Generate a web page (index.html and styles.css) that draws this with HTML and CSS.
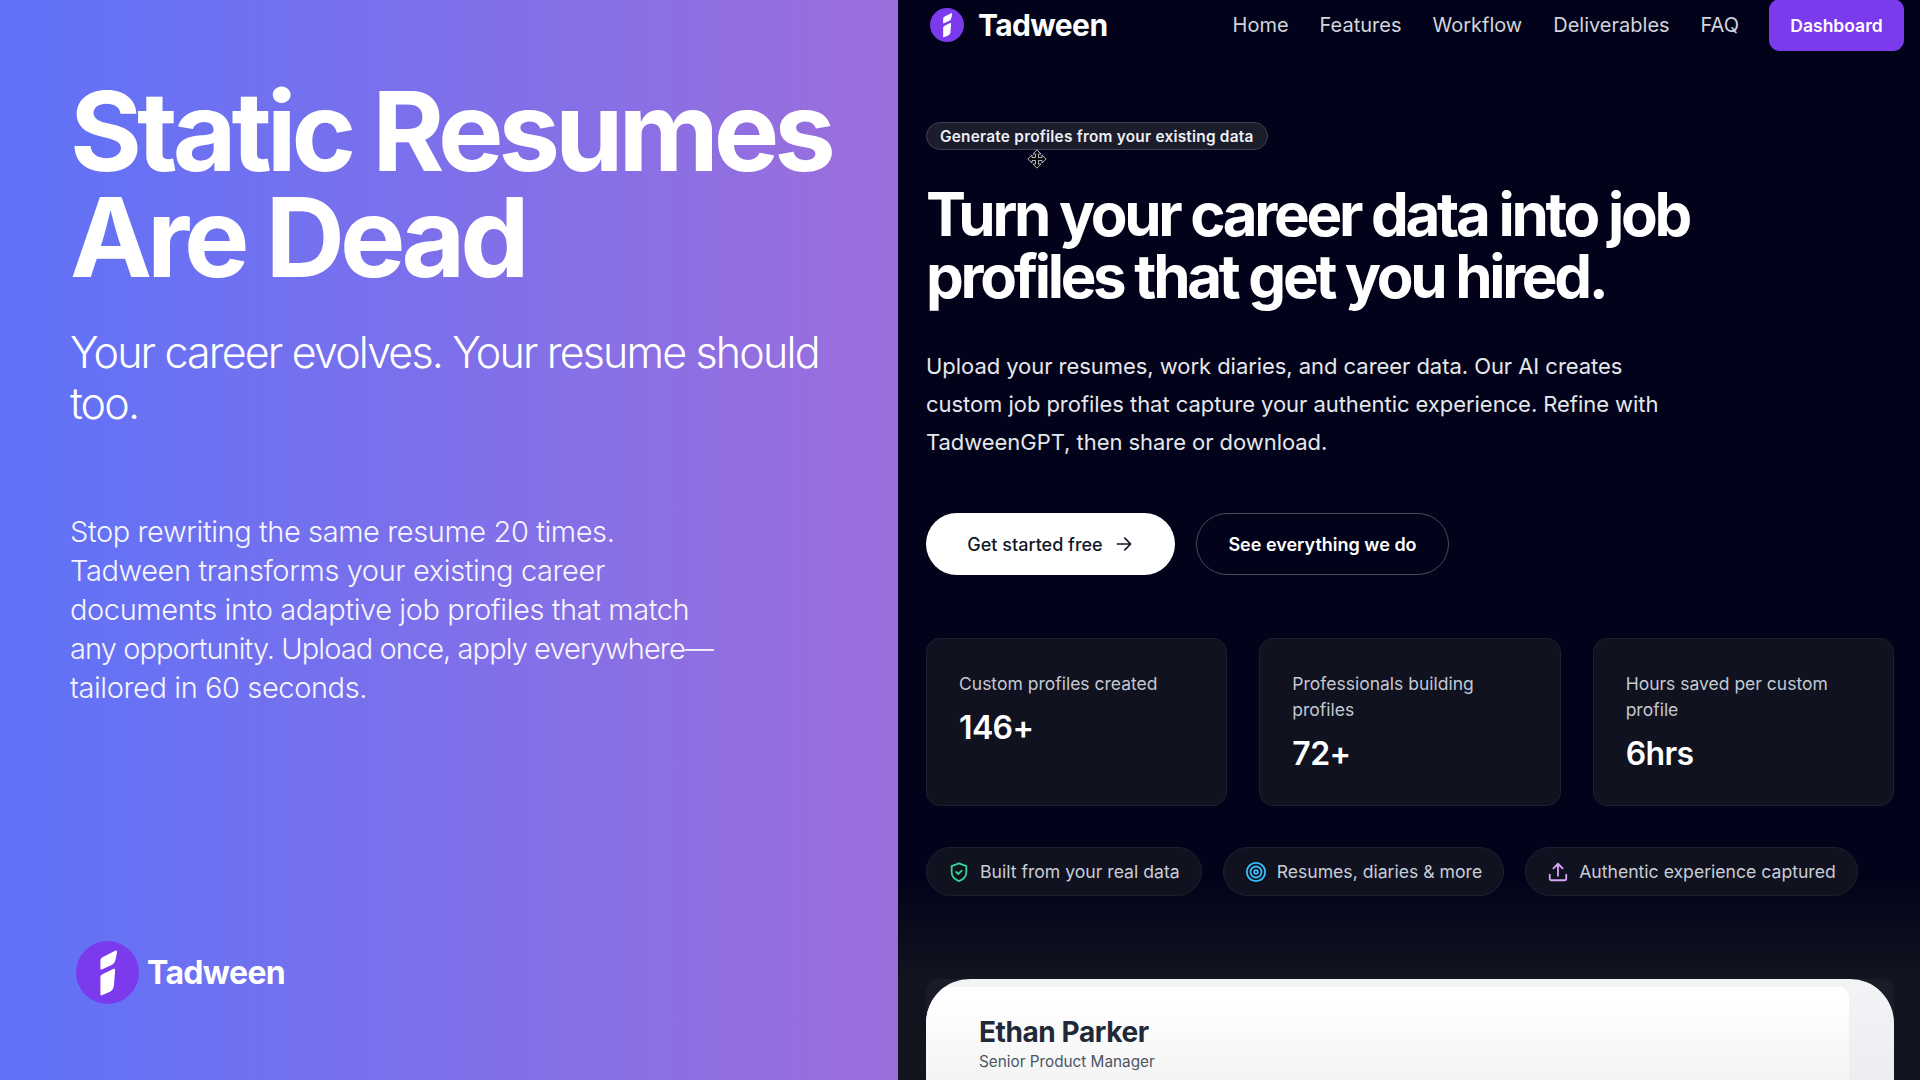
FILE: index.html
```html
<!DOCTYPE html>
<html lang="en">
<head>
<meta charset="utf-8">
<title>Tadween</title>
<link rel="stylesheet" href="styles.css">
</head>
<body>
<div class="page">
  <aside class="promo">
    <div class="promo-top">
      <h2 class="promo-title">Static Resumes<br>Are Dead</h2>
      <p class="promo-sub">Your career evolves. Your resume should too.</p>
      <p class="promo-body">Stop rewriting the same resume 20 times. Tadween transforms your existing career documents into adaptive job profiles that match <span class="promo-tight">any opportunity. Upload once, apply everywhere—</span><br>tailored in 60 seconds.</p>
    </div>
    <div class="promo-brand">
      <svg class="promo-logo" viewBox="0 0 62 62"><circle cx="31" cy="31" r="31" fill="#7c3aed"/><path d="M24 19.5C24 17.5 25 16.5 27 15.5L38.5 9.6C40 9 40.6 9.6 40.3 11.5L39 18C38.4 21 37 22.6 34.5 23.8L25.5 28C24.5 28.400 24 28 24 27ZM24 36C24 34.500 24.700 33.500 26 32.800L36.500 27.500C38 26.800 38.600 27.300 38.500 29L37.300 44C37 47 35.500 49 33 50.200L25.500 53.500C24.500 53.900 24 53.500 24 52.500Z" fill="#fff"/></svg>
      <span class="promo-name">Tadween</span>
    </div>
  </aside>
  <main class="main">
    <nav class="nav">
      <div class="brand">
        <svg class="brand-logo" viewBox="0 0 62 62"><circle cx="31" cy="31" r="31" fill="#7c3aed"/><path d="M24 19.5C24 17.5 25 16.5 27 15.5L38.5 9.6C40 9 40.6 9.6 40.3 11.5L39 18C38.4 21 37 22.6 34.5 23.8L25.5 28C24.5 28.400 24 28 24 27ZM24 36C24 34.500 24.700 33.500 26 32.800L36.500 27.500C38 26.800 38.600 27.300 38.500 29L37.300 44C37 47 35.500 49 33 50.200L25.500 53.500C24.500 53.900 24 53.500 24 52.500Z" fill="#fff"/></svg>
        <span class="brand-name">Tadween</span>
      </div>
      <div class="nav-links">
        <a class="nav-link">Home</a>
        <a class="nav-link">Features</a>
        <a class="nav-link">Workflow</a>
        <a class="nav-link">Deliverables</a>
        <a class="nav-link">FAQ</a>
        <a class="nav-cta">Dashboard</a>
      </div>
    </nav>
    <section class="content">
      <div class="badge">Generate profiles from your existing data</div>
      <svg class="cursor" viewBox="0 0 20 20"><path d="M10 .8 14 5H11.500V8.500H15V6L19.200 10 15 14V11.500H11.500V15H14L10 19.200 6 15H8.500V11.500H5V14L.8 10 5 6V8.500H8.500V5H6Z" fill="#0a0a0f" stroke="#c8c8cc" stroke-width=".9"/></svg>
      <h1 class="title">Turn your career data into job profiles that get you hired.</h1>
      <p class="lead">Upload your resumes, work diaries, and career data. Our AI creates custom job profiles that capture your authentic experience. Refine with TadweenGPT, then share or download.</p>
      <div class="actions">
        <a class="btn btn-primary">Get started free
          <svg class="btn-arrow" viewBox="0 0 24 24"><path d="M4 12h16M13 5l7 7-7 7" fill="none" stroke="#111827" stroke-width="2" stroke-linecap="round" stroke-linejoin="round"/></svg>
        </a>
        <a class="btn btn-ghost">See everything we do</a>
      </div>
      <div class="stats">
        <div class="stat"><div class="stat-label">Custom profiles created</div><div class="stat-value">146+</div></div>
        <div class="stat"><div class="stat-label">Professionals building profiles</div><div class="stat-value">72+</div></div>
        <div class="stat"><div class="stat-label">Hours saved per custom profile</div><div class="stat-value">6hrs</div></div>
      </div>
      <div class="chips">
        <div class="chip">
          <svg class="chip-icon" viewBox="0 0 24 24" fill="none" stroke="#34d399" stroke-width="2" stroke-linecap="round" stroke-linejoin="round"><path d="M12 2.500 20 5.500V12C20 17 16.500 20.300 12 22 7.500 20.300 4 17 4 12V5.500Z"/><path d="M9 12l2.200 2.200L15 10.500"/></svg>
          Built from your real data
        </div>
        <div class="chip">
          <svg class="chip-icon" viewBox="0 0 24 24" fill="none" stroke="#38bdf8" stroke-width="2"><circle cx="12" cy="12" r="10"/><circle cx="12" cy="12" r="6"/><circle cx="12" cy="12" r="2"/></svg>
          Resumes, diaries &amp; more
        </div>
        <div class="chip">
          <svg class="chip-icon" viewBox="0 0 24 24" fill="none" stroke="#d8a4f8" stroke-width="2" stroke-linecap="round" stroke-linejoin="round"><path d="M3 15v4a2 2 0 0 0 2 2h14a2 2 0 0 0 2-2v-4"/><path d="M12 16V3M7 8l5-5 5 5"/></svg>
          Authentic experience captured
        </div>
      </div>
      <div class="preview">
        <div class="preview-frame">
          <div class="preview-sheet">
            <div class="preview-name">Ethan Parker</div>
            <div class="preview-role">Senior Product Manager</div>
          </div>
        </div>
      </div>
    </section>
  </main>
</div>
</body>
</html>
```

FILE: styles.css
```css
* { box-sizing: border-box; }
html, body { margin: 0; height: 100%; overflow: hidden; }
body { font-family: Inter, "Noto Sans", sans-serif; background: #02031a; }
a { text-decoration: none; }
h1, h2, p { margin: 0; }

.page { display: flex; width: 1920px; height: 1080px; overflow: hidden; }

.promo {
  width: 898px;
  flex: none;
  display: flex;
  flex-direction: column;
  justify-content: space-between;
  padding: 78px 50px 76px 70px;
  color: #fff;
  background: linear-gradient(90deg, #5f72f8 0%, #9c6edc 100%);
}
.promo-title { font-size: 110px; line-height: 106px; font-weight: 700; letter-spacing: -0.046em; }
.promo-sub { margin-top: 37px; font-size: 43px; line-height: 51px; font-weight: 300; letter-spacing: -1.85px; }
.promo-body { margin-top: 83px; width: 660px; font-size: 29px; line-height: 39px; font-weight: 300; letter-spacing: -0.4px; color: #f6f5fe; }
.promo-tight { white-space: nowrap; letter-spacing: -0.92px; }
.promo-brand { display: flex; align-items: center; gap: 8px; margin-left: 6px; }
.promo-logo { width: 63px; height: 63px; }
.promo-name { font-size: 32px; font-weight: 700; letter-spacing: -0.02em; }

.main {
  flex: 1;
  min-width: 0;
  background: linear-gradient(180deg, #02031a 0, #02031a 880px, #12141f 980px);
  padding: 0 26px 0 28px;
}

.nav { display: flex; align-items: center; justify-content: space-between; height: 52px; margin: -1px -10px 0 4px; }
.brand { display: flex; align-items: center; gap: 14px; }
.brand-logo { width: 34px; height: 34px; }
.brand-name { color: #fff; font-size: 30px; font-weight: 700; letter-spacing: -0.02em; }
.nav-links { display: flex; align-items: center; gap: 31px; }
.nav-link { color: #d1d5db; font-size: 20px; }
.nav-cta {
  display: flex; align-items: center; justify-content: center;
  width: 135px; height: 52px; margin-left: -1px;
  background: #7c3aed; border-radius: 11px;
  color: #fff; font-size: 17.500px; font-weight: 600;
}

.content { position: relative; padding-top: 71px; }
.badge {
  display: inline-flex; align-items: center; height: 28px; padding: 0 13px;
  background: #1b1c2c; border: 1px solid #3d3f4f; border-radius: 14px;
  color: #eef0f4; font-size: 15.400px; font-weight: 600; letter-spacing: 0.015em;
}
.cursor { position: absolute; left: 101px; top: 98px; width: 20px; height: 20px; }
.title { margin-top: 33px; font-size: 60px; line-height: 62px; font-weight: 700; letter-spacing: -3.3px; color: #fff; }
.lead { margin-top: 40px; width: 760px; font-size: 22px; line-height: 38px; letter-spacing: -0.05px; color: #e5e7eb; }

.actions { display: flex; gap: 21px; margin-top: 52px; }
.btn {
  display: inline-flex; align-items: center; justify-content: center; gap: 11px;
  height: 62px; border-radius: 31px; font-size: 18px;
}
.btn-primary { width: 249px; background: #fff; color: #111827; font-weight: 500; }
.btn-arrow { width: 20px; height: 20px; }
.btn-ghost { width: 253px; border: 1px solid #474957; color: #fff; font-weight: 600; }

.stats { display: grid; grid-template-columns: repeat(3, 1fr); gap: 32px; margin-top: 63px; }
.stat {
  height: 168px; padding: 32px;
  background: #10121f; border: 1px solid #1e2030; border-radius: 14px;
}
.stat-label { font-size: 17.500px; line-height: 26px; color: #c4c8d2; }
.stat-value { margin-top: 11px; font-size: 32px; line-height: 40px; font-weight: 600; letter-spacing: -0.02em; color: #fff; }

.chips { display: flex; gap: 21px; margin-top: 41px; }
.chip {
  display: flex; align-items: center; gap: 10px;
  height: 49px; padding: 0 21px 0 21px;
  background: #10121f; border: 1px solid #1e2030; border-radius: 25px;
  color: #c9cdd7; font-size: 17.620px;
}
.chip-icon { width: 22px; height: 22px; flex: none; }

.preview { margin-top: 83px; height: 140px; background: #1a1c2a; border-radius: 12px 12px 0 0; }
.preview-frame {
  height: 100%; padding: 8px 45px 0 0;
  background: linear-gradient(180deg, #f3f4f6, #eaebee);
  border-radius: 44px 44px 0 0;
  overflow: hidden;
}
.preview-sheet {
  height: 100%; padding: 28px 53px;
  background: linear-gradient(180deg, #fff 10%, #f3f3f4 75%);
  border-radius: 0 10px 0 0;
}
.preview-name { font-size: 28px; line-height: 34px; font-weight: 700; color: #1f2937; letter-spacing: -0.015em; }
.preview-role { font-size: 15.300px; line-height: 26px; color: #4b5563; }
```
